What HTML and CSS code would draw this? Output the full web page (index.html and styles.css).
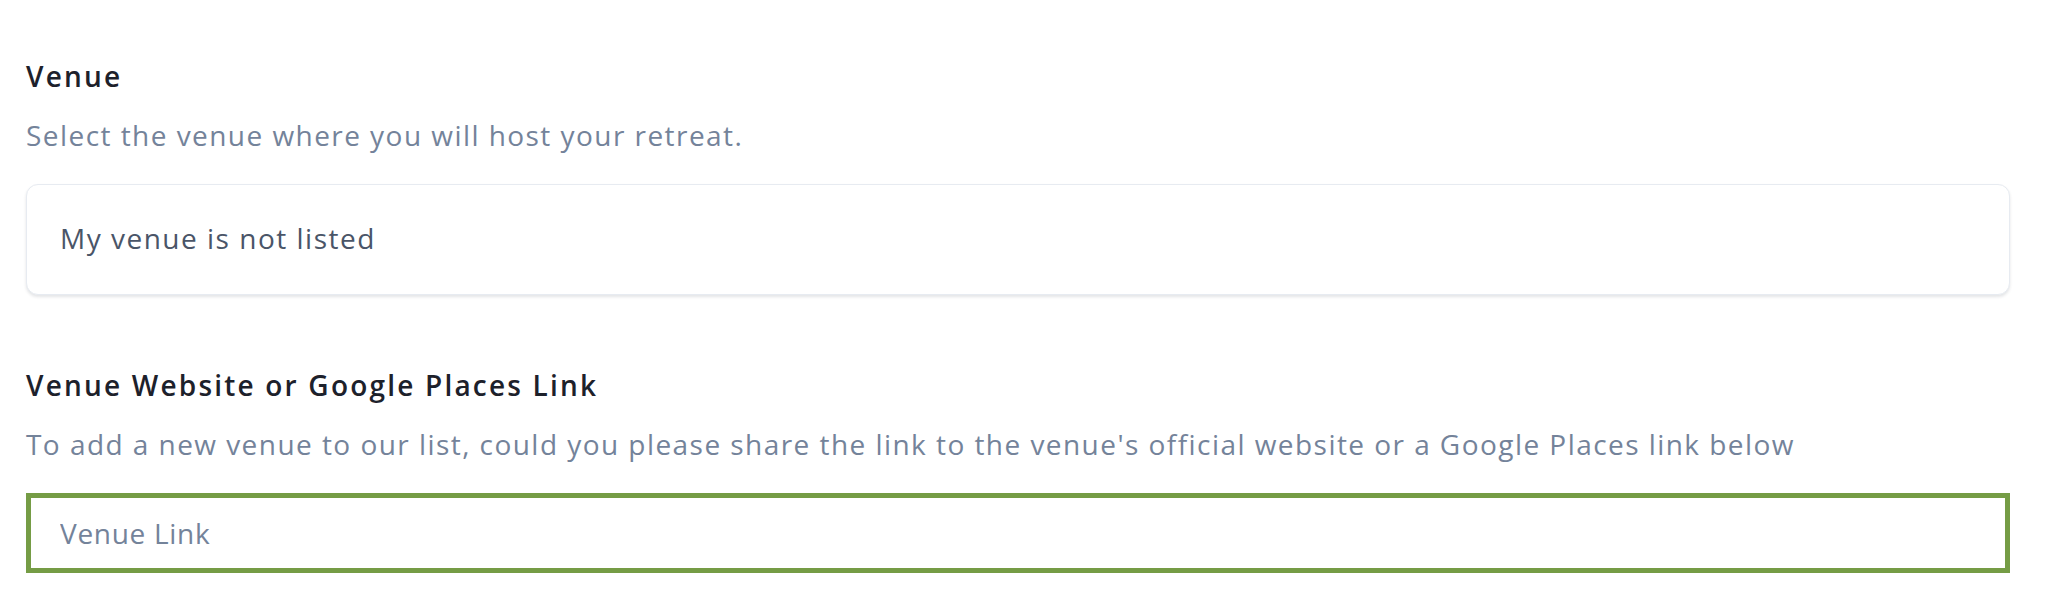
FILE: index.html
```html
<!DOCTYPE html>
<html lang="en">
<head>
<meta charset="utf-8">
<title>Venue</title>
<link rel="stylesheet" href="styles.css">
</head>
<body>
<main class="page">
  <section class="field">
    <h2 class="field-label">Venue</h2>
    <p class="field-help">Select the venue where you will host your retreat.</p>
    <div class="select-card">My venue is not listed</div>
  </section>
  <section class="field field--link">
    <label class="field-label" for="venue-link">Venue Website or Google Places Link</label>
    <p class="field-help">To add a new venue to our list, could you please share the link to the venue's official website or a Google Places link below</p>
    <input class="link-input" id="venue-link" type="text" placeholder="Venue Link">
  </section>
</main>
</body>
</html>
```

FILE: styles.css
```css
* {
  box-sizing: border-box;
}

html, body {
  margin: 0;
  padding: 0;
  background: #ffffff;
}

body {
  font-family: "Open Sans", "Lato", "Noto Sans", "Liberation Sans", sans-serif;
  font-size: 28px;
  line-height: 40px;
  color: #1f2430;
}

.page {
  padding: 56px 42px 0 26px;
  display: flex;
  flex-direction: column;
}

.field {
  display: flex;
  flex-direction: column;
}

.field--link {
  margin-top: 70px;
}

.field-label {
  display: block;
  margin: 0;
  font-size: 28px;
  line-height: 40px;
  font-weight: 600;
  letter-spacing: 2.2px;
  color: #1d212b;
}

.field-help {
  margin: 19px 0 29px;
  font-size: 28px;
  line-height: 40px;
  font-weight: 400;
  letter-spacing: 1.45px;
  color: #74839a;
}

.select-card {
  background: #ffffff;
  border: 1px solid #e7ebf1;
  border-radius: 12px;
  box-shadow: 0 2px 3px rgba(30, 41, 59, 0.12);
  padding: 33px 33px 36px;
  font-size: 28px;
  line-height: 40px;
  letter-spacing: 1.5px;
  color: #4a5568;
}

.link-input {
  display: block;
  width: 100%;
  height: 80px;
  margin: 0;
  padding: 0 29px;
  border: 5px solid #759c45;
  border-radius: 0;
  outline: none;
  background: #ffffff;
  font-family: inherit;
  font-size: 28px;
  letter-spacing: 0.7px;
  color: #4a5568;
}

.link-input::placeholder {
  color: #74839a;
  opacity: 1;
}
```
